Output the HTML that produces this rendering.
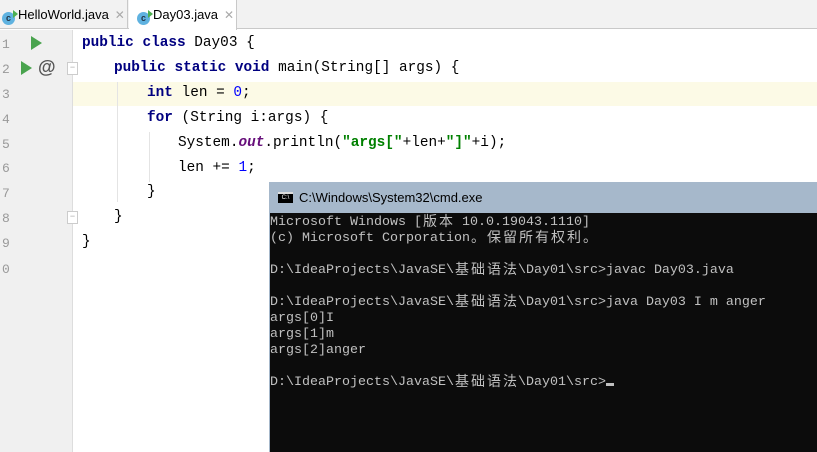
<!DOCTYPE html>
<html><head><meta charset="utf-8"><style>
*{margin:0;padding:0;box-sizing:border-box}
body{width:817px;height:452px;overflow:hidden;background:#fff;position:relative;font-family:"Liberation Sans",sans-serif}
.tabs{position:absolute;left:0;top:0;width:817px;height:29px;background:#f2f2f2;border-bottom:1px solid #c9c9c9}
.tab{position:absolute;top:0;height:29px;font-size:13px;line-height:29px;color:#000}
.ic{display:inline-block;width:13px;height:13px;border-radius:50%;background:#5fb2e0;vertical-align:-2px;margin-right:3px;position:relative;color:#234;font-size:9px;line-height:13px;text-align:center;font-weight:bold}
.ic:after{content:"";position:absolute;right:-3px;top:-2px;border-left:5px solid #4caf50;border-top:4px solid transparent;border-bottom:4px solid transparent}
.x{color:#aaa;margin-left:6px;font-size:12px}
.gut{position:absolute;left:0;top:30px;width:73px;height:422px;background:#f0f0f0;border-right:1px solid #ddd}
.ln{position:absolute;left:2px;font-family:"Liberation Mono",monospace;font-size:13px;color:#999}
.hl{position:absolute;left:73px;top:82px;width:744px;height:24px;background:#fcfae6}
.code{position:absolute;font-family:"Liberation Mono",monospace;font-size:14.4px;white-space:pre;color:#000}
.k{color:#000080;font-weight:bold}.n{color:#0000ff}.s{color:#008000;font-weight:bold}.o{color:#660e7a;font-weight:bold;font-style:italic}
.guide{position:absolute;width:1px;background:#e4e4e4}
.run{position:absolute;border-left:11px solid #49a34e;border-top:7px solid transparent;border-bottom:7px solid transparent}
.cmd{position:absolute;left:269px;top:182px;width:548px;height:270px;background:#a6b8cb}
.cmdt{position:absolute;left:30px;top:8px;font-size:13px;color:#000}
.cmdi{position:absolute;left:9px;top:10px;width:15px;height:11px;background:#000;border-top:2px solid #ddd;color:#fff;font-size:6px;line-height:9px;text-align:center}
.con{position:absolute;left:270px;top:213px;width:547px;height:239px;background:#0c0c0c;color:#c0c0c0;font-family:"Liberation Mono",monospace;font-size:13.33px;white-space:pre;padding-top:2px}
.con div{height:16px;line-height:16px;overflow:visible}
.c{display:inline-block;width:16px;height:16px;text-align:center;font-family:"Noto Sans CJK SC",sans-serif;font-size:14px;line-height:16px;vertical-align:top;position:relative;top:-2px}
.cur{display:inline-block;width:8px;height:3px;background:#c0c0c0;vertical-align:-1px}
</style></head><body>
<div class="tabs">
<div class="tab" style="left:0;width:128px;border-right:1px solid #c9c9c9;padding-left:2px"><span class="ic">c</span>HelloWorld.java<span class="x">✕</span></div>
<div class="tab" style="left:129px;width:108px;background:#fff;height:30px;padding-left:8px;border-right:1px solid #c9c9c9"><span class="ic">c</span>Day03.java<span class="x">✕</span></div>
</div>
<div class="gut"></div>
<div class="hl"></div>
<div class="ln" style="top:37px">1</div><div class="ln" style="top:62px">2</div><div class="ln" style="top:87px">3</div><div class="ln" style="top:112px">4</div><div class="ln" style="top:137px">5</div><div class="ln" style="top:161px">6</div><div class="ln" style="top:186px">7</div><div class="ln" style="top:211px">8</div><div class="ln" style="top:236px">9</div><div class="ln" style="top:262px">0</div>
<div class="run" style="left:31px;top:36px"></div>
<div class="run" style="left:21px;top:61px"></div>
<div style="position:absolute;left:38px;top:57px;font-size:18px;font-weight:bold;color:#555">@</div>
<div style="position:absolute;left:67px;top:62px;width:11px;height:13px;border:1px solid #ccc;background:#fff;font-size:9px;line-height:9px;text-align:center;color:#aaa">−</div>
<div style="position:absolute;left:67px;top:211px;width:11px;height:13px;border:1px solid #ccc;background:#fff;font-size:9px;line-height:9px;text-align:center;color:#aaa">−</div>
<div class="guide" style="left:117px;top:82px;height:120px"></div>
<div class="guide" style="left:149px;top:132px;height:50px"></div>
<div class="code" style="left:82px;top:35px"><span class="k">public class</span> Day03 {</div>
<div class="code" style="left:114px;top:60px"><span class="k">public static void</span> main(String[] args) {</div>
<div class="code" style="left:147px;top:85px"><span class="k">int</span> len = <span class="n">0</span>;</div>
<div class="code" style="left:147px;top:110px"><span class="k">for</span> (String i:args) {</div>
<div class="code" style="left:178px;top:135px">System.<span class="o">out</span>.println(<span class="s">"args["</span>+len+<span class="s">"]"</span>+i);</div>
<div class="code" style="left:178px;top:160px">len += <span class="n">1</span>;</div>
<div class="code" style="left:147px;top:184px">}</div>
<div class="code" style="left:114px;top:209px">}</div>
<div class="code" style="left:82px;top:234px">}</div>
<div class="cmd"><div class="cmdi">C:\</div><div class="cmdt">C:\Windows\System32\cmd.exe</div></div>
<div class="con"><div>Microsoft Windows [<span class="c">版</span><span class="c">本</span> 10.0.19043.1110]</div><div>(c) Microsoft Corporation<span class="c">。</span><span class="c">保</span><span class="c">留</span><span class="c">所</span><span class="c">有</span><span class="c">权</span><span class="c">利</span><span class="c">。</span></div><div></div><div>D:\IdeaProjects\JavaSE\<span class="c">基</span><span class="c">础</span><span class="c">语</span><span class="c">法</span>\Day01\src>javac Day03.java</div><div></div><div>D:\IdeaProjects\JavaSE\<span class="c">基</span><span class="c">础</span><span class="c">语</span><span class="c">法</span>\Day01\src>java Day03 I m anger</div><div>args[0]I</div><div>args[1]m</div><div>args[2]anger</div><div></div><div>D:\IdeaProjects\JavaSE\<span class="c">基</span><span class="c">础</span><span class="c">语</span><span class="c">法</span>\Day01\src><span class="cur"></span></div></div>
</body></html>
